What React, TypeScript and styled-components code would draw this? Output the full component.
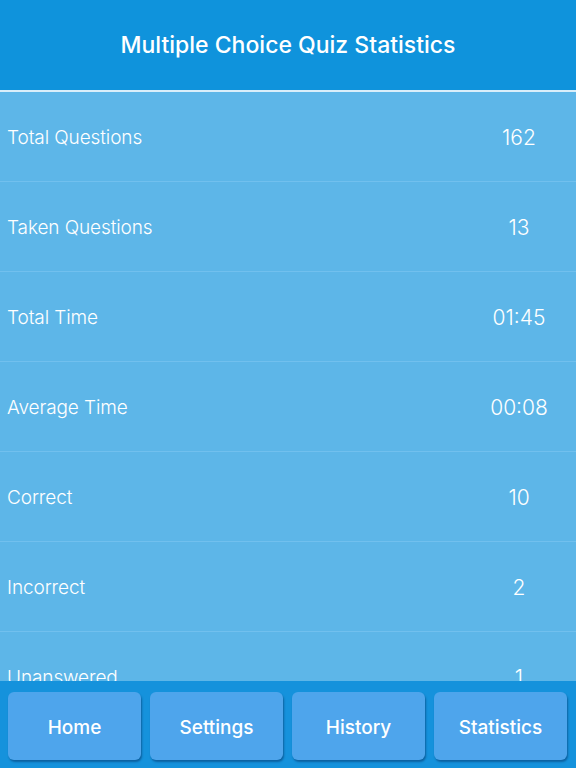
import React from "react";
import styled, { createGlobalStyle } from "styled-components";

const Global = createGlobalStyle`
  html, body { margin: 0; padding: 0; }
  body { font-family: Inter, "Noto Sans", sans-serif; -webkit-font-smoothing: antialiased; }
`;

const Page = styled.div`
  width: 576px;
  height: 768px;
  display: flex;
  flex-direction: column;
  background: #5db6e8;
  overflow: hidden;
`;

const Header = styled.header`
  height: 90px;
  flex: 0 0 auto;
  background: #0f93dc;
  border-bottom: 2px solid #d9eefa;
  display: flex;
  align-items: center;
  justify-content: center;
`;

const Title = styled.h1`
  margin: 0;
  color: #ffffff;
  font-size: 23px;
  font-weight: 500;
  letter-spacing: 0;
`;

const List = styled.div`
  flex: 1 1 auto;
  overflow: hidden;
  display: flex;
  flex-direction: column;
`;

const Row = styled.div`
  flex: 0 0 90px;
  display: flex;
  align-items: center;
  padding-top: 2px;
  box-sizing: border-box;
  border-bottom: 1px solid #71c0ee;
  color: #ffffff;
`;

const Label = styled.span`
  flex: 1;
  padding-left: 7px;
  font-size: 19px;
  font-weight: 300;
  letter-spacing: -0.1px;
`;

const Value = styled.span`
  width: 114px;
  text-align: center;
  font-size: 21px;
  font-weight: 300;
`;

const Footer = styled.nav`
  flex: 0 0 87px;
  background: #1592dc;
  display: grid;
  grid-template-columns: repeat(4, 133px);
  column-gap: 9px;
  padding: 11px 9px 8px 8px;
  box-sizing: border-box;
`;

const NavButton = styled.button`
  height: 68px;
  border: none;
  border-radius: 6px;
  background: #4ea5ec;
  color: #ffffff;
  font-family: Inter, "Noto Sans", sans-serif;
  font-size: 19px;
  font-weight: 500;
  box-shadow: 1px 2px 2px rgba(0, 40, 90, 0.45);
  padding: 2px 0 0;
`;

const stats: [string, string][] = [
  ["Total Questions", "162"],
  ["Taken Questions", "13"],
  ["Total Time", "01:45"],
  ["Average Time", "00:08"],
  ["Correct", "10"],
  ["Incorrect", "2"],
  ["Unanswered", "1"],
];

export default function App() {
  return (
    <>
      <Global />
      <Page>
        <Header>
          <Title>Multiple Choice Quiz Statistics</Title>
        </Header>
        <List>
          {stats.map(([l, v]) => (
            <Row key={l}>
              <Label>{l}</Label>
              <Value>{v}</Value>
            </Row>
          ))}
        </List>
        <Footer>
          {["Home", "Settings", "History", "Statistics"].map((b) => (
            <NavButton key={b}>{b}</NavButton>
          ))}
        </Footer>
      </Page>
    </>
  );
}
